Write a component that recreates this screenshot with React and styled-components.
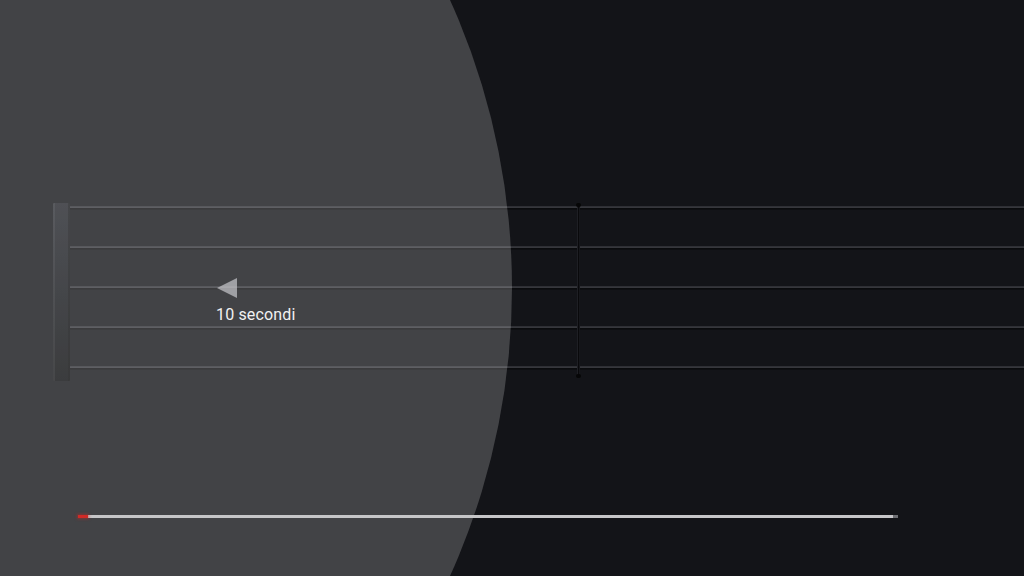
import React from "react";
import styled, { createGlobalStyle } from "styled-components";

const Global = createGlobalStyle`
  html, body { margin: 0; padding: 0; background: #131418; }
  body { font-family: Roboto, "Noto Sans", Arial, sans-serif; }
`;

const Player = styled.div`
  position: relative;
  width: 1024px;
  height: 576px;
  overflow: hidden;
  background: #131418;
  display: flex;
  flex-direction: column;
`;

const Sheet = styled.div`
  display: flex;
  align-items: stretch;
  padding: 203px 0 0 53px;
`;

const Bracket = styled.div`
  width: 17px;
  height: 178px;
  border-radius: 1px;
  background:
    linear-gradient(90deg, rgba(255,255,255,0.06) 0 2px, transparent 2px 15px, rgba(0,0,0,0.35) 15px),
    linear-gradient(180deg, #23252b 0%, #15171b 55%, #0b0c0e 100%);
`;

const Staff = styled.div`
  position: relative;
  flex: 1;
  display: flex;
  flex-direction: column;
  gap: 36px;
  padding-top: 3px;
`;

const StaffLine = styled.div`
  height: 4px;
  background: linear-gradient(180deg, #2e2f34 0 1px, #36373c 1px 2px, #0a0b0d 2px 3px, #0d0e11 3px);
`;

const BarLine = styled.div`
  position: absolute;
  left: ${(p) => p.$x}px;
  top: 1px;
  width: 3px;
  height: 172px;
  background: linear-gradient(90deg, #1e1f24 0 1px, #09090b 1px 2px, #16171b 2px);
  &::before, &::after {
    content: "";
    position: absolute;
    left: -1px;
    width: 5px;
    height: 4px;
    border-radius: 2px;
    background: #060607;
  }
  &::before { top: -1px; }
  &::after { bottom: -2px; }
`;

const SeekCircle = styled.div`
  position: absolute;
  left: -888px;
  top: -412px;
  width: 1400px;
  height: 1400px;
  border-radius: 50%;
  background: rgba(255, 255, 255, 0.2);
  pointer-events: none;
`;

const SeekIndicator = styled.div`
  position: absolute;
  left: 216px;
  top: 278px;
  display: flex;
  flex-direction: column;
  align-items: flex-start;
  gap: 8px;
`;

const Arrow = styled.div`
  width: 0;
  height: 0;
  margin-left: 1px;
  border-top: 10px solid transparent;
  border-bottom: 10px solid transparent;
  border-right: 20px solid rgba(200, 200, 204, 0.7);
`;

const SeekLabel = styled.span`
  font-family: Roboto, "Noto Sans", Arial, sans-serif;
  font-size: 16px;
  line-height: 18px;
  color: #f1f1f1;
  letter-spacing: 0.15px;
`;

const Controls = styled.div`
  position: relative;
  z-index: 2;
  margin-top: auto;
  padding: 0 126px 58px 78px;
`;

const Track = styled.div`
  position: relative;
  height: 3px;
  background: linear-gradient(90deg, #c6c6c8 0 calc(100% - 5px), #6e6f73 calc(100% - 5px));
`;

const Played = styled.div`
  position: absolute;
  left: 0;
  top: 0;
  height: 3px;
  width: ${(p) => p.$pct}%;
  background: #d02a26;
  box-shadow: 0 0 3px 1px rgba(200, 40, 36, 0.5);
`;

export default function App() {
  const lines = [0, 1, 2, 3, 4];
  return (
    <>
      <Global />
      <Player>
        <Sheet>
          <Bracket />
          <Staff>
            {lines.map((i) => (
              <StaffLine key={i} />
            ))}
            <BarLine $x={507} />
          </Staff>
        </Sheet>
        <SeekCircle />
        <SeekIndicator>
          <Arrow />
          <SeekLabel>10 secondi</SeekLabel>
        </SeekIndicator>
        <Controls>
          <Track>
            <Played $pct={1.2} />
          </Track>
        </Controls>
      </Player>
    </>
  );
}
